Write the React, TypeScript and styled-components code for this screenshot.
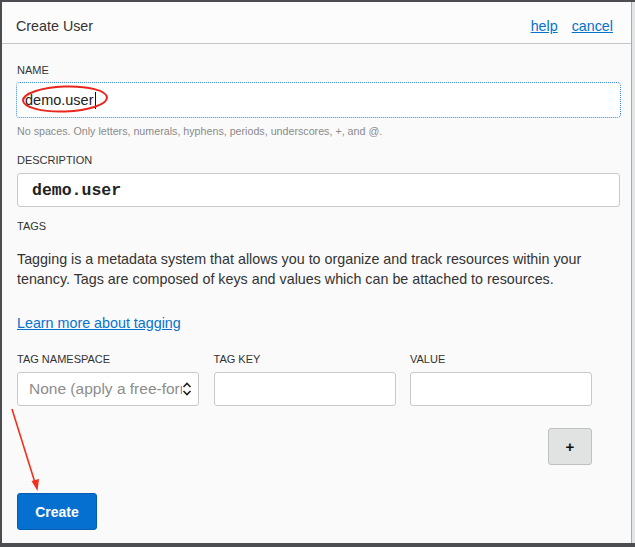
import React from "react";
import styled, { createGlobalStyle } from "styled-components";

const Global = createGlobalStyle`
  html, body { margin: 0; padding: 0; }
  body {
    background: #4b4d50;
    font-family: "Liberation Sans", Arial, sans-serif;
    width: 635px;
    height: 547px;
    overflow: hidden;
  }
`;

const Page = styled.div`
  position: relative;
  width: 635px;
  height: 547px;
  display: flex;
  align-items: flex-start;
  padding: 2px 0 0 2px;
  box-sizing: border-box;
`;

const Dialog = styled.div`
  width: 630px;
  height: 541px;
  background: #fafafa;
  border-right: 1px solid #a9abad;
  display: flex;
  flex-direction: column;
  box-sizing: border-box;
`;

const SideStrip = styled.div`
  width: 3px;
  height: 541px;
  background: #e4e5e6;
`;

const Header = styled.div`
  height: 42px;
  flex: none;
  display: flex;
  align-items: center;
  justify-content: space-between;
  padding: 6px 18px 0 14px;
  background: #fcfcfc;
  border-bottom: 1px solid #c4c6c8;
  box-sizing: border-box;
`;

const Title = styled.div`
  font-size: 14.3px;
  color: #333;
`;

const Links = styled.div`
  display: flex;
  gap: 14px;
`;

const Link = styled.a`
  font-size: 14.3px;
  color: #0572ce;
  text-decoration: underline;
  cursor: pointer;
`;

const Body = styled.div`
  position: relative;
  display: flex;
  flex-direction: column;
  padding: 20px 11px 0 15px;
`;

const Label = styled.div<{ $mt?: number }>`
  font-size: 11px;
  line-height: 13px;
  color: #333;
  text-transform: uppercase;
  margin-top: ${(p) => p.$mt ?? 0}px;
`;

const Field = styled.div<{ $focus?: boolean; $mono?: boolean; $mt?: number }>`
  position: relative;
  height: 34px;
  margin-top: ${(p) => p.$mt ?? 6}px;
  background: #fff;
  box-sizing: border-box;
  border-radius: 3px;
  border: 1px solid ${(p) => (p.$focus ? "transparent" : "#c7c9cb")};
  outline: ${(p) => (p.$focus ? "1px dotted #3d8fe0" : "none")};
  display: flex;
  align-items: center;
  padding-left: ${(p) => (p.$mono ? 14 : 7)}px;
  font-family: ${(p) =>
    p.$mono ? `"Liberation Mono", "Courier New", monospace` : `"Liberation Sans", Arial, sans-serif`};
  font-weight: ${(p) => (p.$mono ? 700 : 400)};
  font-size: ${(p) => (p.$mono ? 16.5 : 14.5)}px;
  color: #222;
`;

const Caret = styled.span`
  display: inline-block;
  width: 1px;
  height: 17px;
  background: #111;
  margin-left: 1px;
`;

const Hint = styled.div`
  font-size: 10.7px;
  line-height: 13px;
  color: #8a8a8a;
  margin-top: 8px;
`;

const Paragraph = styled.p`
  margin: 16px 0 0;
  font-size: 14.3px;
  line-height: 20px;
  color: #333;
  max-width: 590px;
`;

const LearnLink = styled(Link)`
  margin-top: 24px;
  line-height: 20px;
  align-self: flex-start;
`;

const TagGrid = styled.div`
  display: grid;
  grid-template-columns: 182px 182px 182px;
  column-gap: 14.5px;
  margin-top: 20px;
`;

const TagCol = styled.div`
  display: flex;
  flex-direction: column;
`;

const Select = styled(Field)`
  padding-left: 11px;
  padding-right: 6px;
  justify-content: space-between;
  overflow: hidden;
  font-size: 15.5px;
`;

const Placeholder = styled.span`
  color: #8d8d8d;
  white-space: nowrap;
  overflow: hidden;
  flex: 1;
`;

const PlusRow = styled.div`
  display: flex;
  justify-content: flex-end;
  width: 575px;
  margin-top: 22px;
`;

const PlusButton = styled.button`
  width: 44px;
  height: 37px;
  background: #e1e3e3;
  border: 1px solid #bdc1c3;
  border-radius: 3px;
  font-family: "Liberation Sans", Arial, sans-serif;
  font-weight: 700;
  font-size: 15px;
  color: #111;
  padding: 0;
`;

const CreateButton = styled.button`
  align-self: flex-start;
  margin-top: 28px;
  width: 80px;
  height: 37px;
  background: #0670d0;
  border: 1px solid #045cb0;
  border-radius: 3px;
  color: #fff;
  font-family: "Liberation Sans", Arial, sans-serif;
  font-weight: 700;
  font-size: 14px;
  padding: 0;
`;

const Annotation = styled.svg`
  position: absolute;
  left: 0;
  top: 0;
  pointer-events: none;
`;

const Chevrons = () => (
  <svg width="10" height="16" viewBox="0 0 10 16">
    <path d="M1.5 6 L5 2.5 L8.5 6" fill="none" stroke="#222" strokeWidth="1.6" />
    <path d="M1.5 10 L5 13.5 L8.5 10" fill="none" stroke="#222" strokeWidth="1.6" />
  </svg>
);

export default function App() {
  return (
    <>
      <Global />
      <Page>
        <Dialog>
          <Header>
            <Title>Create User</Title>
            <Links>
              <Link>help</Link>
              <Link>cancel</Link>
            </Links>
          </Header>
          <Body>
            <Label>Name</Label>
            <Field $focus>
              demo.user
              <Caret />
            </Field>
            <Hint>No spaces. Only letters, numerals, hyphens, periods, underscores, +, and @.</Hint>
            <Label $mt={16}>Description</Label>
            <Field $mono>demo.user</Field>
            <Label $mt={13}>Tags</Label>
            <Paragraph>
              Tagging is a metadata system that allows you to organize and track resources within your
              tenancy. Tags are composed of keys and values which can be attached to resources.
            </Paragraph>
            <LearnLink>Learn more about tagging</LearnLink>
            <TagGrid>
              <TagCol>
                <Label>Tag Namespace</Label>
                <Select $mt={6}>
                  <Placeholder>None (apply a free-form tag)</Placeholder>
                  <Chevrons />
                </Select>
              </TagCol>
              <TagCol>
                <Label>Tag Key</Label>
                <Field $mt={6} />
              </TagCol>
              <TagCol>
                <Label>Value</Label>
                <Field $mt={6} />
              </TagCol>
            </TagGrid>
            <PlusRow>
              <PlusButton>+</PlusButton>
            </PlusRow>
            <CreateButton>Create</CreateButton>
          </Body>
        </Dialog>
        <SideStrip />
        <Annotation width="635" height="547" viewBox="0 0 635 547">
          <ellipse cx="65" cy="99" rx="42" ry="12.5" fill="none" stroke="#e8261c" strokeWidth="2" transform="rotate(-2 65 99)" />
          <line x1="12" y1="409" x2="36" y2="486" stroke="#f2311c" strokeWidth="1.6" />
          <path d="M31.5 481 L37.5 491 L39 479 Z" fill="#f2311c" />
        </Annotation>
      </Page>
    </>
  );
}
